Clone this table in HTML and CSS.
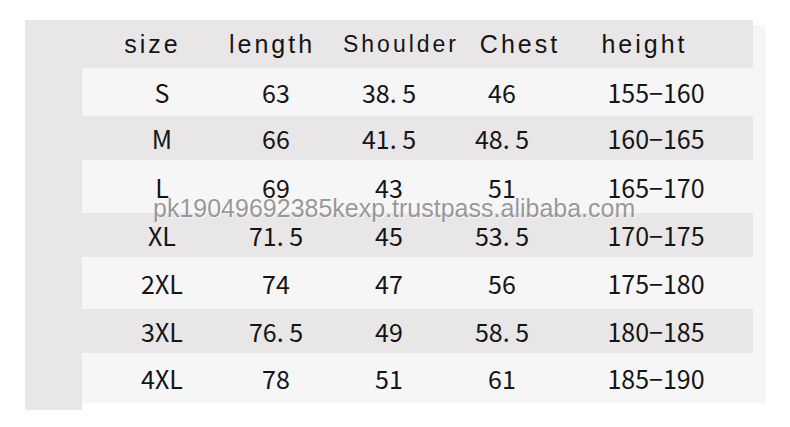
FILE: index.html
```html
<!DOCTYPE html>
<html>
<head>
<meta charset="utf-8">
<link rel="stylesheet" href="styles.css">
</head>
<body>
<div class="chart">
  <div class="row head">
    <span>size</span><span>length</span><span class="small">Shoulder</span><span>Chest</span><span>height</span>
  </div>
  <div class="row data r1"><span>S</span><span>63</span><span>38. 5</span><span>46</span><span>155−160</span></div>
  <div class="row data gray r2"><span>M</span><span>66</span><span>41. 5</span><span>48. 5</span><span>160−165</span></div>
  <div class="row data r3"><span>L</span><span>69</span><span>43</span><span>51</span><span>165−170</span></div>
  <div class="row data gray r4"><span>XL</span><span>71. 5</span><span>45</span><span>53. 5</span><span>170−175</span></div>
  <div class="row data r5"><span>2XL</span><span>74</span><span>47</span><span>56</span><span>175−180</span></div>
  <div class="row data gray r6"><span>3XL</span><span>76. 5</span><span>49</span><span>58. 5</span><span>180−185</span></div>
  <div class="row data r7"><span>4XL</span><span>78</span><span>51</span><span>61</span><span>185−190</span></div>
  <div class="watermark">pk19049692385kexp.trustpass.alibaba.com</div>
</div>
</body>
</html>
```
FILE: styles.css
```css
html, body {
  margin: 0;
  padding: 0;
  background: #ffffff;
}

.chart {
  position: relative;
  margin: 20px 0 0 25px;
  width: 741px;
  height: 390px;
  background:
    linear-gradient(#e8e6e7, #e8e6e7) 0 0 / 57px 390px no-repeat,
    linear-gradient(#f6f6f6, #f6f6f6) 57px 5px / 684px 378px no-repeat;
}

.row {
  width: 728px;
  display: grid;
  align-items: center;
  justify-items: center;
  color: #151515;
}

.head {
  height: 48px;
  background: #e8e6e7;
  padding-left: 67px;
  box-sizing: border-box;
  grid-template-columns: 121px 118px 140px 98px 151px;
  font-family: "Liberation Sans", Arial, sans-serif;
  font-size: 25px;
  letter-spacing: 3px;
  line-height: 48px;
}

.head .small {
  font-size: 23px;
}

.data {
  padding-left: 80px;
  box-sizing: border-box;
  grid-template-columns: 114px 114px 112px 114px 194px;
  font-family: "Noto Sans CJK SC", "Noto Sans", sans-serif;
  font-size: 25px;
}

.gray {
  background: #e8e6e7;
}

.r1 { height: 48px; }
.r2 { height: 44px; }
.r3 { height: 53px; }
.r4 { height: 44px; }
.r5 { height: 52px; }
.r6 { height: 44px; }
.r7 { height: 50px; }

.watermark {
  position: absolute;
  left: 128px;
  top: 173px;
  font-family: "Liberation Sans", Arial, sans-serif;
  font-size: 25px;
  line-height: 30px;
  color: rgba(115, 115, 115, 0.72);
  text-shadow: 1px 1px 0 rgba(255, 255, 255, 0.6);
  white-space: nowrap;
}
```
